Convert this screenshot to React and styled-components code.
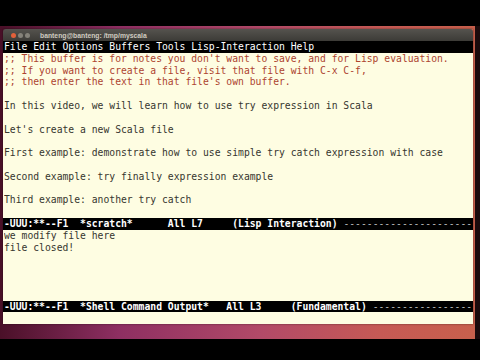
import React from 'react';
import styled, { createGlobalStyle } from 'styled-components';

const GlobalStyle = createGlobalStyle`
  html, body {
    margin: 0;
    padding: 0;
    background: #000;
  }
  body {
    width: 480px;
    height: 360px;
    overflow: hidden;
  }
`;

const Screen = styled.div`
  width: 480px;
  height: 360px;
  background: #000;
  display: flex;
  flex-direction: column;
`;

const Letterbox = styled.div`
  flex: none;
  height: ${(p) => p.h}px;
  background: #000;
`;

const Middle = styled.div`
  flex: none;
  height: 313px;
  display: flex;
`;

const Desktop = styled.div`
  flex: 1;
  min-width: 0;
  display: flex;
  flex-direction: column;
  padding: 3px 2px 0 3px;
  background: linear-gradient(90deg, #4a1028 0%, #8e2f62 25%, #b24a68 55%, #c65a55 80%, #c8604c 100%);
`;

const Pillar = styled.div`
  flex: none;
  width: 5px;
  background: #1a0a0c;
`;

const Window = styled.div`
  display: flex;
  flex-direction: column;
  min-width: 0;
  overflow: hidden;
  box-shadow: 0 0 2px rgba(0, 0, 0, 0.5);
`;

const TitleBar = styled.div`
  height: 12px;
  display: flex;
  align-items: center;
  padding-left: 8px;
  gap: 2px;
  background: linear-gradient(#55534e, #3c3b37);
  border-radius: 3px 3px 0 0;
`;

const WinButton = styled.span`
  width: 5px;
  height: 5px;
  border-radius: 50%;
  background: ${(p) => (p.close ? '#e2603a' : '#85827a')};
`;

const Title = styled.span`
  margin-left: 8px;
  font-family: 'Liberation Sans', Arial, sans-serif;
  font-weight: bold;
  font-size: 6.8px;
  color: #cfcbc0;
`;

const Terminal = styled.div`
  background: #fefde2;
  padding-left: 1px;
  font-family: 'DejaVu Sans Mono', monospace;
  font-size: 9.72px;
  min-width: 0;
  overflow: hidden;
`;

const Row = styled.div`
  height: 11.8px;
  line-height: 11.8px;
  white-space: pre;
  overflow: hidden;
  margin-left: ${(p) => (p.bar ? '-1px' : '0')};
  padding-left: ${(p) => (p.bar ? '1px' : '0')};
  background: ${(p) => (p.bar ? '#000' : 'transparent')};
  color: ${(p) => (p.bar ? '#fff' : p.comment ? '#ad4430' : '#36362f')};
  font-weight: ${(p) => (p.bold ? 'bold' : 'normal')};
`;

const Dashes = styled.span`
  color: #bdbdbd;
  font-weight: normal;
`;

const COLS = 80;

const scratch = [
  { t: ";; This buffer is for notes you don't want to save, and for Lisp evaluation.", c: true },
  { t: ';; If you want to create a file, visit that file with C-x C-f,', c: true },
  { t: ";; then enter the text in that file's own buffer.", c: true },
  { t: '' },
  { t: 'In this video, we will learn how to use try expression in Scala' },
  { t: '' },
  { t: "Let's create a new Scala file" },
  { t: '' },
  { t: 'First example: demonstrate how to use simple try catch expression with case' },
  { t: '' },
  { t: 'Second example: try finally expression example' },
  { t: '' },
  { t: 'Third example: another try catch' },
  { t: '' },
];

const output = ['we modify file here', 'file closed!', '', '', '', ''];

function ModeLine({ text }) {
  return (
    <Row bar bold>
      {text}
      <Dashes>{'-'.repeat(COLS - text.length)}</Dashes>
    </Row>
  );
}

export default function App() {
  return (
    <>
      <GlobalStyle />
      <Screen>
        <Letterbox h={26} />
        <Middle>
          <Desktop>
            <Window>
              <TitleBar>
                <WinButton close />
                <WinButton />
                <WinButton />
                <Title>banteng@banteng: /tmp/myscala</Title>
              </TitleBar>
              <Terminal>
                <Row bar>File Edit Options Buffers Tools Lisp-Interaction Help</Row>
                {scratch.map((l, i) => (
                  <Row key={i} comment={l.c}>
                    {l.t}
                  </Row>
                ))}
                <ModeLine text="-UUU:**--F1  *scratch*      All L7     (Lisp Interaction) " />
                {output.map((l, i) => (
                  <Row key={i}>{l}</Row>
                ))}
                <ModeLine text="-UUU:**--F1  *Shell Command Output*   All L3     (Fundamental) " />
                <Row />
              </Terminal>
            </Window>
          </Desktop>
          <Pillar />
        </Middle>
        <Letterbox h={21} />
      </Screen>
    </>
  );
}
